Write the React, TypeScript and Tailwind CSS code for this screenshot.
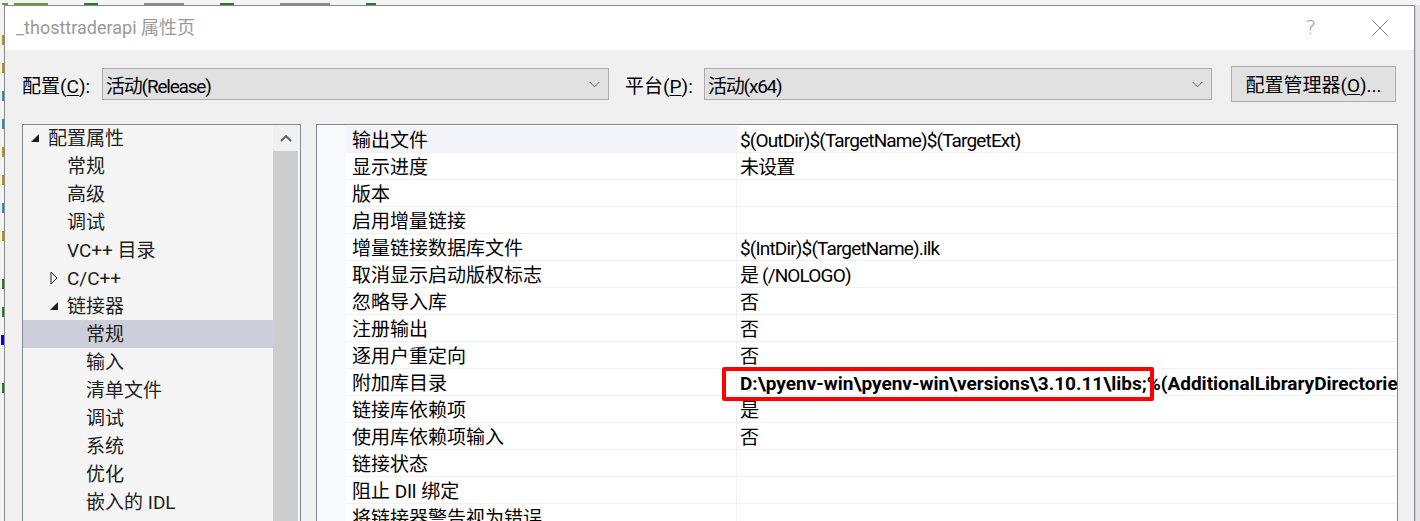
import React from "react";

const FONT = { fontFamily: 'Roboto, "Noto Sans CJK SC", sans-serif' };

function Chevron() {
  return (
    <svg width="11" height="7" viewBox="0 0 11 7" className="shrink-0">
      <path d="M0.5 0.8 L5.5 5.8 L10.5 0.8" fill="none" stroke="#606060" strokeWidth="1" />
    </svg>
  );
}

function Combo({ text, width }: { text: string; width: string }) {
  return (
    <div className={`${width} h-[32px] border border-[#adadad] bg-[#e1e1e1] flex items-center pl-[3px] pr-[8px]`}>
      <span className="flex-1 text-[19px] text-black leading-none pt-[5px] tracking-[-1.2px]">{text}</span>
      <Chevron />
    </div>
  );
}

function ExpandedTri() {
  return (
    <svg width="10" height="10" viewBox="0 0 10 10" className="shrink-0">
      <path d="M9 1 L9 9 L1 9 Z" fill="#1e1e1e" />
    </svg>
  );
}

function CollapsedTri() {
  return (
    <svg width="8" height="14" viewBox="0 0 8 14" className="shrink-0">
      <path d="M1 1 L7 7 L1 13 Z" fill="none" stroke="#1e1e1e" strokeWidth="1" />
    </svg>
  );
}

type TreeItem = { label: string; indent: number; tri?: "open" | "closed"; selected?: boolean };

const tree: TreeItem[] = [
  { label: "配置属性", indent: 0, tri: "open" },
  { label: "常规", indent: 1 },
  { label: "高级", indent: 1 },
  { label: "调试", indent: 1 },
  { label: "VC++ 目录", indent: 1 },
  { label: "C/C++", indent: 1, tri: "closed" },
  { label: "链接器", indent: 1, tri: "open" },
  { label: "常规", indent: 2, selected: true },
  { label: "输入", indent: 2 },
  { label: "清单文件", indent: 2 },
  { label: "调试", indent: 2 },
  { label: "系统", indent: 2 },
  { label: "优化", indent: 2 },
  { label: "嵌入的 IDL", indent: 2 },
];

const props: [string, string][] = [
  ["输出文件", "$(OutDir)$(TargetName)$(TargetExt)"],
  ["显示进度", "未设置"],
  ["版本", ""],
  ["启用增量链接", ""],
  ["增量链接数据库文件", "$(IntDir)$(TargetName).ilk"],
  ["取消显示启动版权标志", "是 (/NOLOGO)"],
  ["忽略导入库", "否"],
  ["注册输出", "否"],
  ["逐用户重定向", "否"],
  ["附加库目录", "BOLD"],
  ["链接库依赖项", "是"],
  ["使用库依赖项输入", "否"],
  ["链接状态", ""],
  ["阻止 Dll 绑定", ""],
  ["将链接器警告视为错误", ""],
];

function TreeRow({ item }: { item: TreeItem }) {
  const pads = ["pl-[6px]", "pl-[25px]", "pl-[44px]"];
  return (
    <div className={`h-[28px] shrink-0 flex items-center ${pads[item.indent]}`}>
      <div className={`h-full flex items-center flex-1 ${item.selected ? "bg-[#cccedb] -ml-[45px] pl-[45px]" : ""}`}>
        <div className="w-[11px] flex items-center justify-center">
          {item.tri === "open" && <ExpandedTri />}
          {item.tri === "closed" && <CollapsedTri />}
        </div>
        <span className="ml-[8px] text-[19px] text-[#1e1e1e] leading-none whitespace-nowrap">{item.label}</span>
      </div>
    </div>
  );
}

export default function App() {
  return (
    <div style={FONT} className="w-[1420px] h-[521px] overflow-hidden bg-[#e9e9ec] flex flex-col">
      {/* top strip from the editor behind */}
      <div className="h-[5px] shrink-0 bg-[#f4f4f4] flex items-end gap-[6px] pl-[2px]">
        <div className="w-[6px] h-[2px] bg-[#6a9a3a]" />
        <div className="w-[34px] h-[2px] bg-[#6a9a3a]" />
        <div className="w-[14px] h-[2px] bg-[#2a7a2a] ml-[30px]" />
        <div className="w-[40px] h-[2px] bg-[#888888] ml-[40px]" />
        <div className="w-[14px] h-[2px] bg-[#2a7a2a] ml-[30px]" />
        <div className="w-[50px] h-[2px] bg-[#888888] ml-[40px]" />
        <div className="w-[10px] h-[2px] bg-[#2a7a2a] ml-[30px]" />
      </div>
      <div className="flex flex-1 min-h-0">
        {/* left strip */}
        <div className="w-[4px] shrink-0 bg-[#f3f3f3] flex flex-col items-end gap-[18px] pt-[30px]">
          <div className="w-[2px] h-[10px] bg-[#b8960b]" />
          <div className="w-[2px] h-[10px] bg-[#b8960b]" />
          <div className="w-[2px] h-[10px] bg-[#2b91af]" />
          <div className="w-[2px] h-[10px] bg-[#2b91af]" />
          <div className="w-[2px] h-[10px] bg-[#b8960b]" />
          <div className="w-[2px] h-[10px] bg-[#b8960b]" />
          <div className="w-[2px] h-[10px] bg-[#2b91af]" />
          <div className="w-[2px] h-[10px] bg-[#b8960b]" />
          <div className="w-[2px] h-[10px] bg-[#2a7a2a] mt-[20px]" />
          <div className="w-[2px] h-[10px] bg-[#2a7a2a]" />
          <div className="w-[3px] h-[10px] bg-[#0000ff]" />
          <div className="w-[2px] h-[10px] bg-[#2a7a2a] mt-[20px]" />
        </div>

        {/* dialog */}
        <div className="w-[1411px] shrink-0 border-l border-t border-r border-[#8a8a8a] bg-[#f0f0f0] flex flex-col">
          {/* title bar */}
          <div className="h-[44px] shrink-0 bg-white flex items-center pl-[11px] pr-[26px]">
            <span className="text-[18px] text-[#999999] flex-1 leading-none">_thosttraderapi 属性页</span>
            <span className="text-[20px] text-[#8a8a8a] font-light leading-none mr-[56px] -mt-[2px]" style={{ fontFamily: '"DejaVu Sans", sans-serif' }}>?</span>
            <svg width="16" height="16" viewBox="0 0 16 16">
              <path d="M0.5 0.5 L15.5 15.5 M15.5 0.5 L0.5 15.5" stroke="#808080" strokeWidth="1" />
            </svg>
          </div>

          {/* config row */}
          <div className="mt-[16px] h-[36px] shrink-0 flex items-center pl-[17px]">
            <span className="text-[19px] text-black w-[80px] leading-none pt-[5px]">
              配置(<span className="underline underline-offset-2">C</span>):
            </span>
            <Combo text="活动(Release)" width="w-[507px]" />
            <span className="ml-[16px] text-[19px] text-black w-[79px] leading-none pt-[5px]">
              平台(<span className="underline underline-offset-2">P</span>):
            </span>
            <Combo text="活动(x64)" width="w-[508px]" />
            <button className="ml-[19px] w-[165px] h-[36px] border border-[#adadad] bg-[#e1e1e1] text-[19px] text-black leading-none pt-[3px]">
              配置管理器(<span className="underline underline-offset-2">O</span>)...
            </button>
          </div>

          {/* panels */}
          <div className="mt-[22px] flex flex-1 min-h-0 pl-[17px]">
            {/* tree */}
            <div className="w-[279px] shrink-0 border-l border-t border-r border-[#828790] bg-[#f5f5f5] flex">
              <div className="flex-1 flex flex-col overflow-hidden -mt-[1px]">
                {tree.map((t, i) => (
                  <TreeRow key={i} item={t} />
                ))}
              </div>
              <div className="w-[25px] shrink-0 flex flex-col mr-[2px]">
                <div className="h-[26px] bg-[#f0f0f0] flex items-center justify-center">
                  <svg width="12" height="7" viewBox="0 0 12 7">
                    <path d="M1 6 L6 1 L11 6" fill="none" stroke="#606060" strokeWidth="2" />
                  </svg>
                </div>
                <div className="flex-1 bg-[#cdcdcd]" />
              </div>
            </div>

            {/* property grid */}
            <div className="ml-[15px] w-[1082px] shrink-0 border-l border-t border-r border-[#828790] bg-white flex">
              <div className="w-[29px] shrink-0 bg-[#f7f9fc]" />
              <div className="flex-1 flex flex-col pt-[1px] overflow-hidden">
                {props.map(([name, value], i) => (
                  <div key={i} className="h-[27px] shrink-0 flex border-b border-[#f0f0f5]">
                    <div className={`w-[391px] shrink-0 flex items-center pl-[6px] pt-[2px] border-r border-[#f0f0f5] ${i === 0 ? "bg-[#f3f5fa]" : ""}`}>
                      <span className="text-[19px] text-black leading-none whitespace-nowrap">{name}</span>
                    </div>
                    <div className="flex-1 relative flex items-center pl-[3px] pt-[2px] min-w-0">
                      {value === "BOLD" ? (
                        <>
                          <span className="text-[19px] font-bold text-black leading-none whitespace-nowrap">
                            D:\pyenv-win\pyenv-win\versions\3.10.11\libs;%(AdditionalLibraryDirectories)
                          </span>
                          <div className="absolute left-[-15px] top-[-2px] w-[432px] h-[34px] border-[4px] border-[#ff0000] rounded-[2px]" />
                        </>
                      ) : (
                        <span className="text-[19px] text-black leading-none whitespace-nowrap tracking-[-0.85px]">{value}</span>
                      )}
                    </div>
                  </div>
                ))}
              </div>
            </div>
          </div>
        </div>

        {/* right strip */}
        <div className="flex-1 bg-[#e4e4ea] border-l border-[#d0d0d8]" />
      </div>
    </div>
  );
}
